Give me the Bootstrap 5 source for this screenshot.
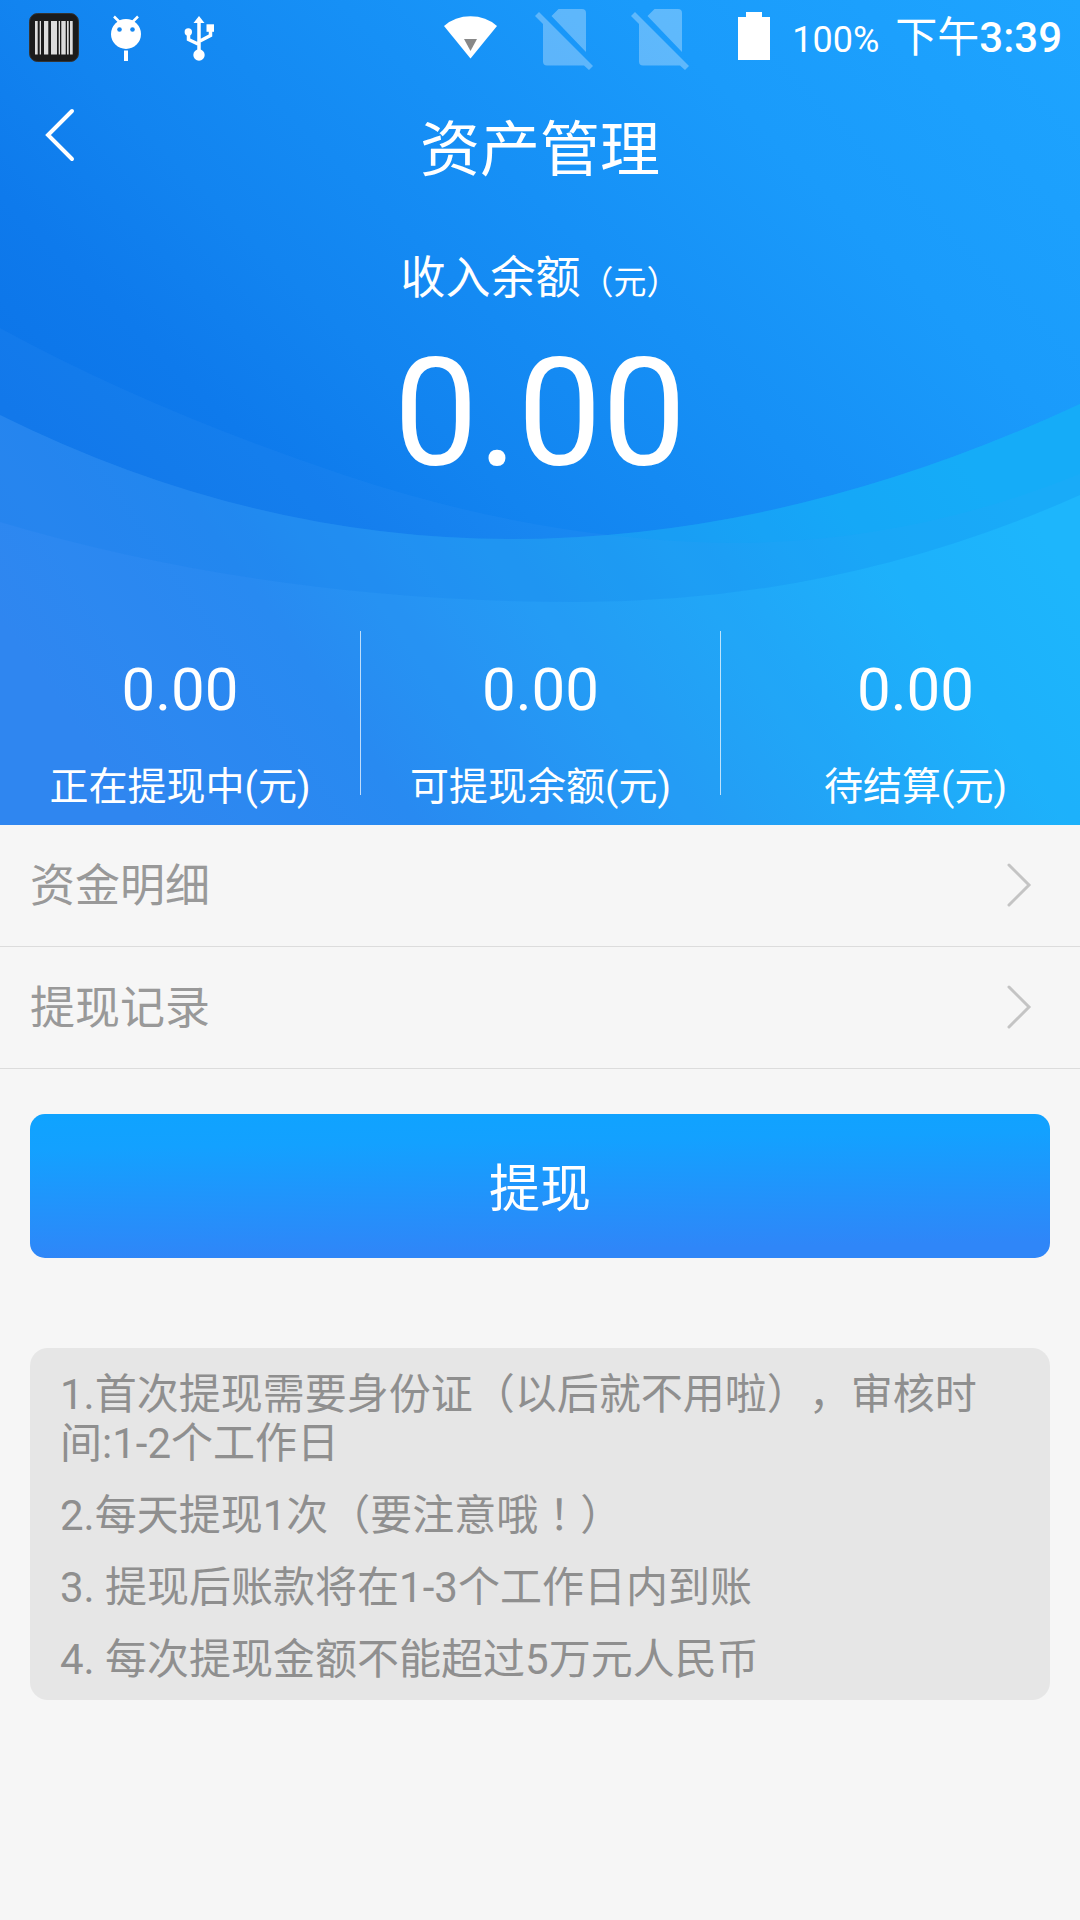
<!DOCTYPE html>
<html lang="zh-CN">
<head>
<meta charset="utf-8">
<meta name="viewport" content="width=device-width, initial-scale=1">
<title>资产管理</title>
<link href="https://cdn.jsdelivr.net/npm/bootstrap@5.3.0/dist/css/bootstrap.min.css" rel="stylesheet">
<style>
  body { font-family: Roboto, "Noto Sans CJK SC", sans-serif; background: #f6f6f6; text-spacing-trim: space-all; }
  .hero { color: #fff; background: #1588f2; padding-bottom: 30px; }
  .hero-bg { z-index: 0; }
  .hero-layer { z-index: 1; }
  .status-bar { height: 75px; padding: 0 18px; }
  .status-pct { font-size: 36px; line-height: 48px; margin: 16px 16px 0 0; }
  .status-clock { font-size: 42px; line-height: 48px; margin-top: 14px; }
  .title-bar { height: 144px; grid-template-columns: 120px 1fr 120px; }
  .back-link { padding: 30px 0 0 44px; }
  .page-title { font-size: 60px; line-height: 72px; padding-top: 40px; }
  .balance-label { font-size: 45px; line-height: 60px; margin-top: 30px; }
  .balance-unit { font-size: 33px; line-height: 0; }
  .balance-value { font-size: 150px; line-height: 180px; margin-top: 15px; }
  .stat-row { margin-top: 127px; }
  .stat { height: 164px; }
  .stat + .stat { border-left: 1px solid rgba(255,255,255,.7); }
  .stat:last-child { padding-left: 30px; }
  .stat-value { font-size: 60px; line-height: 72px; margin-top: 23px; }
  .stat-name { font-size: 39px; line-height: 48px; margin-top: 37px; }
  .menu-row { height: 122px; padding: 0 48px 2px 30px; border-bottom: 1px solid #dcdcdc; color: #999; font-size: 45px; line-height: 60px; }
  .menu-text { padding-top: 5px; }
  .page-body { padding: 45px 30px; }
  .btn-withdraw, .btn-withdraw:hover, .btn-withdraw:active { height: 144px; padding: 12px 0 4px; border: 0; border-radius: 15px; color: #fff; font-size: 51px; background: linear-gradient(179deg, #0fa3ff 0%, #13a1ff 22%, #2f86f8 90%); }
  .notes { margin-top: 90px; padding: 22px 30px 16px; border-radius: 18px; background: #e6e6e6; color: #8f8f8f; font-size: 42px; line-height: 49px; }
  .notes li + li { margin-top: 23px; }
  .mid-punct { font-family: "Noto Sans CJK TC", sans-serif; line-height: 0; }
</style>
</head>
<body>
<header class="hero position-relative overflow-hidden">
  <svg class="hero-bg position-absolute top-0 start-0 w-100 h-100" viewBox="0 0 1080 825" preserveAspectRatio="none" aria-hidden="true">
    <defs>
      <linearGradient id="sky" gradientUnits="userSpaceOnUse" x1="-200" y1="200" x2="540" y2="-540">
        <stop offset="0" stop-color="#0c74e8"/><stop offset=".14" stop-color="#0e7aec"/><stop offset=".28" stop-color="#1284f0"/><stop offset=".5" stop-color="#1690f6"/><stop offset=".7" stop-color="#1a9bfb"/><stop offset="1" stop-color="#1ea5ff"/>
      </linearGradient>
      <linearGradient id="sea" gradientUnits="userSpaceOnUse" x1="160" y1="850" x2="900" y2="330">
        <stop offset="0" stop-color="#2b83ef"/><stop offset=".25" stop-color="#2488f0"/><stop offset=".55" stop-color="#1e9ff5"/><stop offset=".85" stop-color="#18b3fb"/><stop offset="1" stop-color="#18b8fc"/>
      </linearGradient>
    </defs>
    <rect width="1080" height="825" fill="url(#sky)"/>
    <path d="M0 415Q250 539 510 539Q790 539 1080 404V825H0Z" fill="url(#sea)"/>
    <path d="M0 328Q150 410 344 475T730 543Q910 543 1080 474V825H0Z" fill="#5aa8ff" fill-opacity=".09"/>
    <path d="M0 415Q250 539 510 539Q790 539 1080 404V495Q840 602 578 602Q270 602 0 522Z" fill="#0a7ae8" fill-opacity=".18"/>
  </svg>

  <div class="hero-layer position-relative">
    <div class="status-bar d-flex justify-content-between">
      <div class="d-flex">
        <svg width="72" height="75" viewBox="18 0 72 75" role="img" aria-label="条码">
          <rect x="29.5" y="13.5" width="49" height="48" rx="8" fill="#1b1b1b" stroke="#333"/>
          <path d="M35 21h2.700v33.500H35zM39.700 21H41v33.500h-1.300zM44 21h4.300v33.500H44zM51 21h6v33.500h-6zM58.700 21H60v33.500h-1.300zM61.300 21h4.400v33.500h-4.400zM67 21h1.700v33.500H67zM70 21h2.700v33.500H70z" fill="#dcdcdc"/>
        </svg>
        <svg width="72" height="75" viewBox="90 0 72 75" fill="#fff" role="img" aria-label="调试">
          <circle cx="126" cy="34" r="15"/><path d="M124 50.500h4V61h-4z"/><path d="M114 16.500l6 6M138 16.500l-6 6" stroke="#fff" stroke-width="2.500"/>
          <circle cx="119.500" cy="29.500" r="2.300" fill="#1587f1"/><circle cx="132.500" cy="29.500" r="2.300" fill="#1587f1"/>
        </svg>
        <svg width="72" height="75" viewBox="162 0 72 75" fill="#fff" role="img" aria-label="USB">
          <path d="M199 16l5.500 7h-11z"/><circle cx="199" cy="55" r="5.700"/><circle cx="188.300" cy="32" r="3.700"/><path d="M206.500 24.300h7.500v7.500h-7.500z"/>
          <path d="M199 20V52M188.500 34V39.500L199 44.500M210.500 30V35.500L199 41.500" fill="none" stroke="#fff" stroke-width="3.500"/>
        </svg>
      </div>
      <div class="d-flex">
        <svg width="96" height="75" viewBox="420 0 96 75" role="img" aria-label="无线网络">
          <path d="M444 26Q455 16.300 470.500 16.300T497 26L470.500 58.500Z" fill="#fff"/><path d="M464 39h13l-6.500 12z" fill="#888"/>
        </svg>
        <svg width="96" height="75" viewBox="516 0 96 75" fill="#fff" fill-opacity=".3" role="img" aria-label="无SIM卡1">
          <path d="M535 16l4-4 54 54-4 4-5-4.500H547q-4 0-4-4V24zM551.500 16l7-7H582q4 0 4 4V52z"/>
        </svg>
        <svg width="96" height="75" viewBox="516 0 96 75" fill="#fff" fill-opacity=".3" role="img" aria-label="无SIM卡2">
          <path d="M535 16l4-4 54 54-4 4-5-4.500H547q-4 0-4-4V24zM551.500 16l7-7H582q4 0 4 4V52z"/>
        </svg>
        <svg width="84" height="75" viewBox="708 0 84 75" fill="#fff" role="img" aria-label="电池"><path d="M738 17h8v-5h16v5h8v43h-32z"/></svg>
        <span class="status-pct">100%</span>
        <span class="status-clock">下午<span class="fw-medium">3:39</span></span>
      </div>
    </div>

    <div class="title-bar d-grid">
      <a class="back-link" href="#" aria-label="返回">
        <svg class="d-block" width="32" height="60" viewBox="0 0 32 60" fill="none" stroke="#fff" stroke-width="4" stroke-linecap="round"><path d="M28 6L4 30L28 54"/></svg>
      </a>
      <h1 class="page-title fw-normal text-center mb-0">资产管理</h1>
    </div>

    <p class="balance-label text-center mb-0">收入余额<span class="balance-unit">（元）</span></p>
    <p class="balance-value text-center mb-0">0.00</p>

    <div class="stat-row row g-0 text-center">
      <div class="stat col-4"><div class="stat-value">0.00</div><div class="stat-name">正在提现中(元)</div></div>
      <div class="stat col-4"><div class="stat-value">0.00</div><div class="stat-name">可提现余额(元)</div></div>
      <div class="stat col-4"><div class="stat-value">0.00</div><div class="stat-name">待结算(元)</div></div>
    </div>
  </div>
</header>

<nav aria-label="资产">
  <a class="menu-row d-flex align-items-center justify-content-between text-decoration-none" href="#">
    <span class="menu-text">资金明细</span>
    <svg width="26" height="44" viewBox="0 0 26 44" fill="none" stroke="#c4c4c4" stroke-width="3" stroke-linecap="round" aria-hidden="true"><path d="M3 2L23 22L3 42"/></svg>
  </a>
  <a class="menu-row d-flex align-items-center justify-content-between text-decoration-none" href="#">
    <span class="menu-text">提现记录</span>
    <svg width="26" height="44" viewBox="0 0 26 44" fill="none" stroke="#c4c4c4" stroke-width="3" stroke-linecap="round" aria-hidden="true"><path d="M3 2L23 22L3 42"/></svg>
  </a>
</nav>

<main class="page-body">
  <button type="button" class="btn btn-withdraw w-100">提现</button>
  <ul class="notes list-unstyled mb-0">
    <li>1.首次提现需要身份证（以后就不用啦），审核时间:1-2个工作日</li>
    <li>2.每天提现1次（要注意哦<span class="mid-punct" lang="zh-TW">！</span>）</li>
    <li>3. 提现后账款将在1-3个工作日内到账</li>
    <li>4. 每次提现金额不能超过5万元人民币</li>
  </ul>
</main>
<script src="https://cdn.jsdelivr.net/npm/bootstrap@5.3.0/dist/js/bootstrap.bundle.min.js"></script>
</body>
</html>
